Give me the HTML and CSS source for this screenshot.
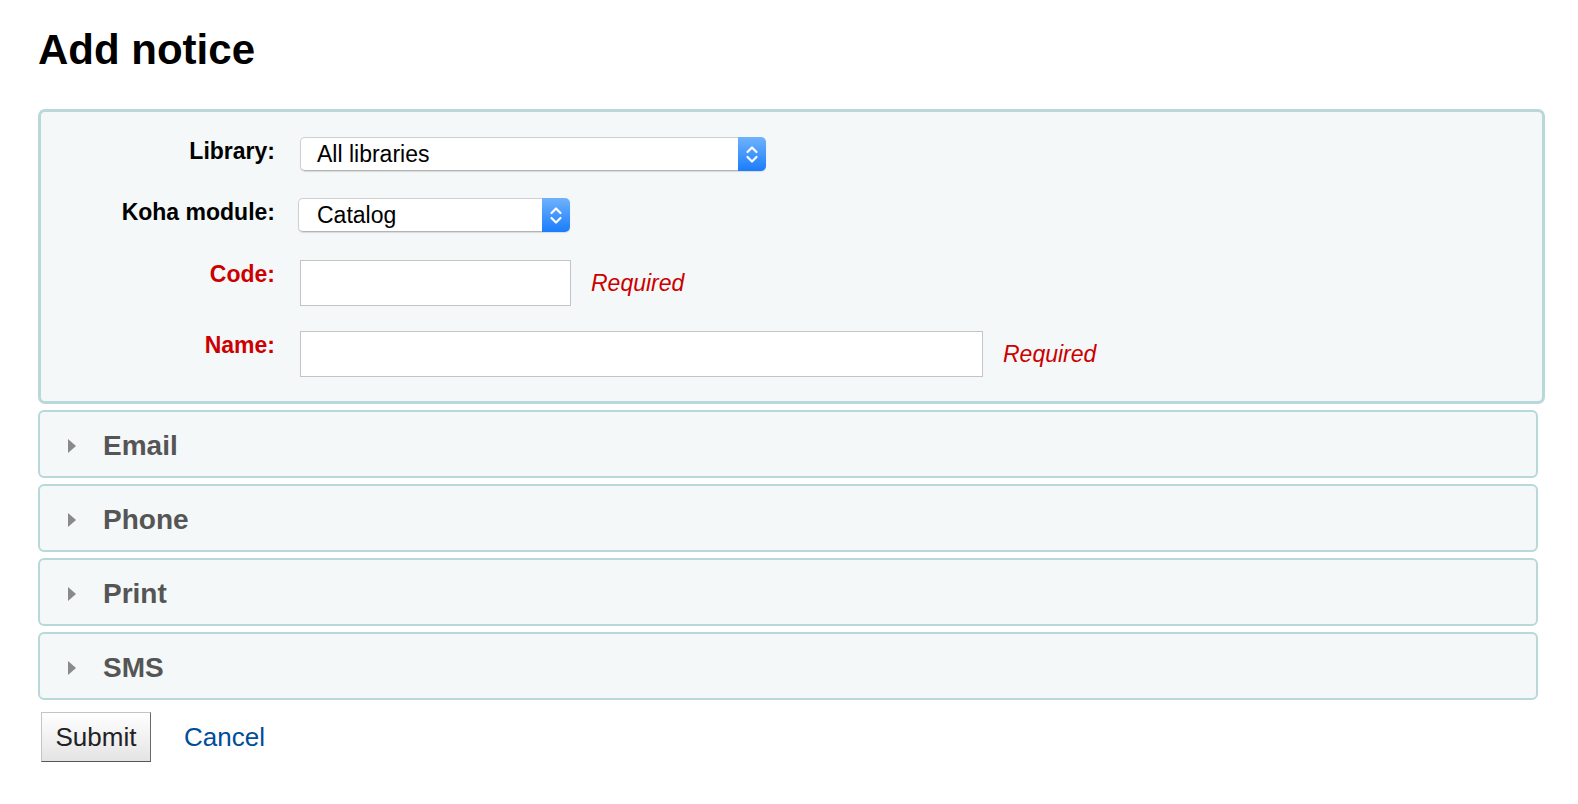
FILE: index.html
```html
<!DOCTYPE html>
<html lang="en">
<head>
<meta charset="utf-8">
<title>Add notice</title>
<link rel="stylesheet" href="styles.css">
</head>
<body>
<h1 class="title">Add notice</h1>
<form class="notice-form">
  <div class="main-fields">
    <div class="row row-library">
      <label class="row-label">Library:</label>
      <div class="select select-library">
        <span class="select-value">All libraries</span>
        <span class="select-btn">
          <svg width="28" height="34" viewBox="0 0 28 34"><path d="M9.5 15 L14 10.5 L18.5 15 M9.5 20 L14 24.5 L18.5 20" fill="none" stroke="#fff" stroke-width="2.2" stroke-linecap="round" stroke-linejoin="round"/></svg>
        </span>
      </div>
    </div>
    <div class="row row-module">
      <label class="row-label">Koha module:</label>
      <div class="select select-module">
        <span class="select-value">Catalog</span>
        <span class="select-btn">
          <svg width="28" height="34" viewBox="0 0 28 34"><path d="M9.5 15 L14 10.5 L18.5 15 M9.5 20 L14 24.5 L18.5 20" fill="none" stroke="#fff" stroke-width="2.2" stroke-linecap="round" stroke-linejoin="round"/></svg>
        </span>
      </div>
    </div>
    <div class="row row-code">
      <label class="row-label is-required">Code:</label>
      <input class="text-input input-code" type="text">
      <span class="required-note">Required</span>
    </div>
    <div class="row row-name">
      <label class="row-label is-required">Name:</label>
      <input class="text-input input-name" type="text">
      <span class="required-note">Required</span>
    </div>
  </div>
  <div class="section"><span class="arrow"></span><span class="section-title">Email</span></div>
  <div class="section"><span class="arrow"></span><span class="section-title">Phone</span></div>
  <div class="section"><span class="arrow"></span><span class="section-title">Print</span></div>
  <div class="section"><span class="arrow"></span><span class="section-title">SMS</span></div>
  <div class="actions">
    <button class="btn-submit" type="button">Submit</button>
    <a class="cancel-link" href="#">Cancel</a>
  </div>
</form>
</body>
</html>
```

FILE: styles.css
```css
* {
  box-sizing: border-box;
}

body {
  margin: 0;
  padding: 26px 0 0 38px;
  font-family: "Liberation Sans", Arial, sans-serif;
  color: #000;
  background: #fff;
}

.title {
  margin: 0 0 35px;
  font-size: 42px;
  line-height: 48px;
  font-weight: bold;
}

.notice-form {
  margin: 0;
}

.main-fields {
  width: 1507px;
  border: 3px solid #b9d8d9;
  border-radius: 7px;
  background: #f4f8f9;
  padding: 25px 0 24px 0;
  margin-bottom: 6px;
}

.row {
  display: flex;
  align-items: flex-start;
}

.row-library { margin-bottom: 27px; }
.row-module { margin-bottom: 28px; }
.row-code { margin-bottom: 25px; }

.row-label {
  width: 234px;
  margin-right: 25px;
  padding-top: 1px;
  text-align: right;
  font-size: 23px;
  line-height: 27px;
  font-weight: bold;
  color: #000;
}

.row-label.is-required {
  color: #cc0000;
}

.select {
  display: flex;
  height: 34px;
  border-radius: 5px;
  box-shadow: 0 1px 1px rgba(0, 0, 0, 0.12);
}

.select-library {
  width: 466px;
}

.select-module {
  width: 272px;
  margin-left: -2px;
}

.select-value {
  flex: 1;
  height: 34px;
  border: 1px solid #cfcfcf;
  border-bottom-color: #b4b4b4;
  border-right: none;
  border-radius: 5px 0 0 5px;
  background: #fff;
  padding-left: 16px;
  font-size: 23px;
  line-height: 32px;
  color: #000;
}

.select-module .select-value {
  padding-left: 18px;
}

.select-btn {
  width: 28px;
  height: 34px;
  border-radius: 0 5px 5px 0;
  background: linear-gradient(#6fb2fd, #1a7dfb);
  display: flex;
}

.text-input {
  height: 46px;
  border: 1px solid #c4c4c4;
  background: #fff;
  margin: 0;
  padding: 0 6px;
  font-family: inherit;
  font-size: 23px;
  outline: none;
}

.input-code {
  width: 271px;
}

.input-name {
  width: 683px;
}

.required-note {
  align-self: center;
  margin-left: 20px;
  font-size: 23px;
  line-height: 27px;
  font-style: italic;
  color: #cc0000;
}

.section {
  display: flex;
  align-items: center;
  width: 1500px;
  height: 68px;
  border: 2px solid #b9d8d9;
  border-radius: 6px;
  background: #f4f8f9;
  padding: 3px 0 0 28px;
  margin-bottom: 6px;
}

.arrow {
  width: 0;
  height: 0;
  border-left: 8px solid #8a8a8a;
  border-top: 7px solid transparent;
  border-bottom: 7px solid transparent;
  margin-right: 27px;
}

.section-title {
  font-size: 28px;
  line-height: 32px;
  font-weight: bold;
  color: #555;
}

.actions {
  display: flex;
  align-items: center;
  margin-top: 12px;
  padding-left: 3px;
}

.btn-submit {
  width: 110px;
  height: 50px;
  margin: 0;
  padding: 0;
  border: 1px solid;
  border-color: #c4c4c4 #6a6a6a #555 #c4c4c4;
  background: linear-gradient(#ffffff, #e4e4e4);
  font-family: inherit;
  font-size: 26px;
  color: #222;
}

.cancel-link {
  margin-left: 33px;
  font-size: 26px;
  color: #004d99;
  text-decoration: none;
}
```
